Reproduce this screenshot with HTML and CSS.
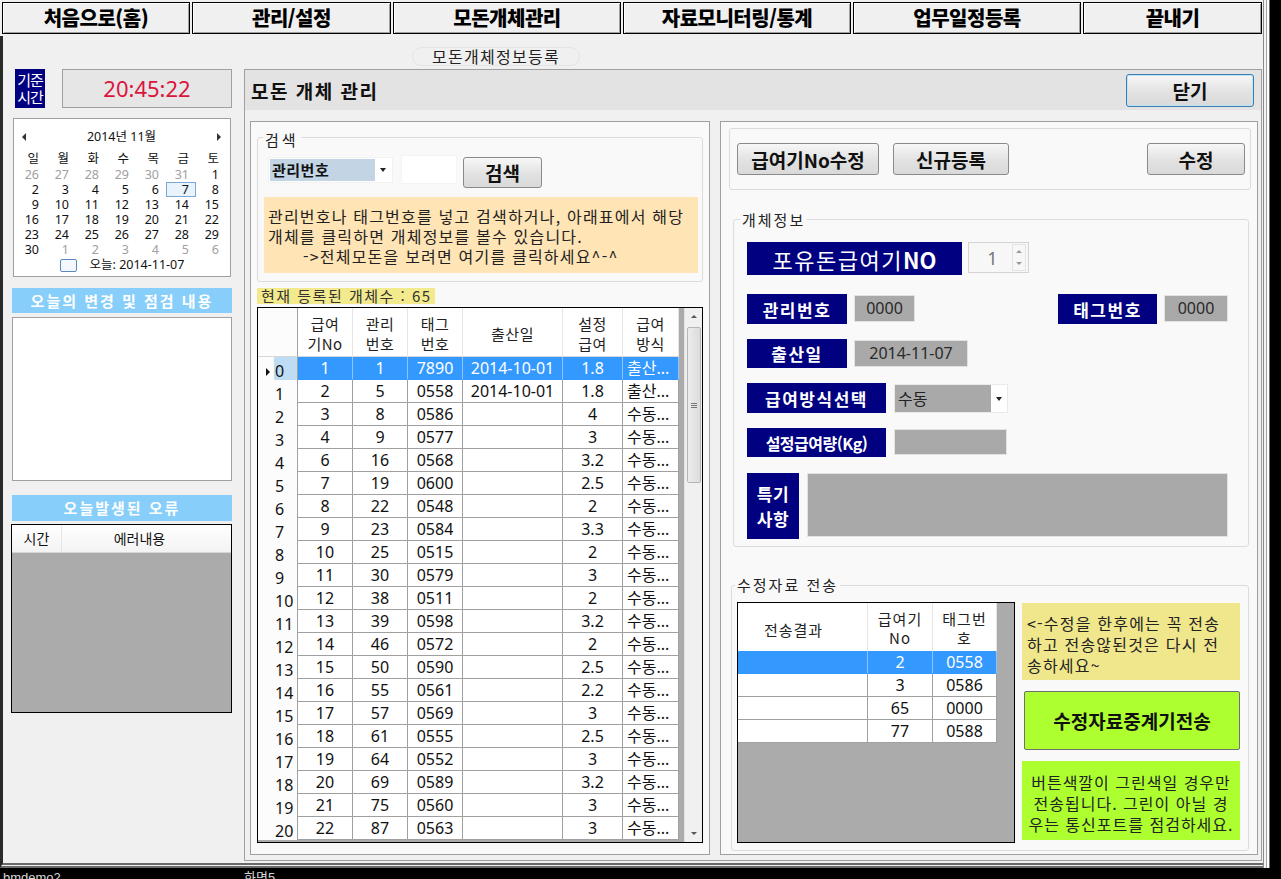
FILE: index.html
```html
<!DOCTYPE html>
<html lang="ko">
<head>
<meta charset="utf-8">
<title>모돈 개체 관리</title>
<link rel="stylesheet" href="styles.css">
</head>
<body>
<div class="screen">
  <div class="frame-row">
    <div class="window">
      <nav class="menubar">
        <button class="menu-btn m1">처음으로(홈)</button>
        <button class="menu-btn m2">관리/설정</button>
        <button class="menu-btn m3">모돈개체관리</button>
        <button class="menu-btn m4">자료모니터링/통계</button>
        <button class="menu-btn m5">업무일정등록</button>
        <button class="menu-btn m6">끝내기</button>
      </nav>
      <div class="window-body">
        <div class="tabstrip"><span class="tab-pill">모돈개체정보등록</span></div>
        <div class="content">
          <aside class="left">
            <div class="clock-row">
              <div class="kijun">기준<br>시간</div>
              <div class="clock">20:45:22</div>
            </div>
            <div class="calendar">
              <div class="cal-head"><i class="arr-l"></i><span>2014년 11월</span><i class="arr-r"></i></div>
              <div class="cal-grid">
                <span class="dn">일</span><span class="dn">월</span><span class="dn">화</span><span class="dn">수</span><span class="dn">목</span><span class="dn">금</span><span class="dn">토</span>
                <span class="om">26</span><span class="om">27</span><span class="om">28</span><span class="om">29</span><span class="om">30</span><span class="om">31</span><span>1</span>
                <span>2</span><span>3</span><span>4</span><span>5</span><span>6</span><span class="seld">7</span><span>8</span>
                <span>9</span><span>10</span><span>11</span><span>12</span><span>13</span><span>14</span><span>15</span>
                <span>16</span><span>17</span><span>18</span><span>19</span><span>20</span><span>21</span><span>22</span>
                <span>23</span><span>24</span><span>25</span><span>26</span><span>27</span><span>28</span><span>29</span>
                <span>30</span><span class="om">1</span><span class="om">2</span><span class="om">3</span><span class="om">4</span><span class="om">5</span><span class="om">6</span>
              </div>
              <div class="cal-today"><i class="today-box"></i><span>오늘: 2014-11-07</span></div>
            </div>
            <div class="blue-head h1">오늘의 변경 및 점검 내용</div>
            <div class="memo-box"></div>
            <div class="blue-head h2">오늘발생된 오류</div>
            <div class="errgrid">
              <div class="err-head"><span class="c-time">시간</span><span class="c-msg">에러내용</span></div>
            </div>
          </aside>

          <section class="main">
            <div class="titlebar">
              <h1 class="title">모돈 개체 관리</h1>
              <button class="btn close-btn">닫기</button>
            </div>
            <div class="panel-body">
              <div class="sub sub-mid">
                <div class="group g-search">
                  <div class="group-label">검색</div>
                  <div class="search-row">
                    <div class="combo-sel"><span class="combo-val">관리번호</span><i class="dd"></i></div>
                    <div class="text-in"></div>
                    <button class="btn search-btn">검색</button>
                  </div>
                  <div class="info-yellow">
                    <div>관리번호나 태그번호를 넣고 검색하거나, 아래표에서 해당</div>
                    <div>개체를 클릭하면 개체정보를 볼수 있습니다.</div>
                    <div class="indent">-&gt;전체모돈을 보려면 여기를 클릭하세요^-^</div>
                  </div>
                </div>
                <div class="count-label">현재 등록된 개체수 : 65</div>
                <div class="dgrid">
                  <div class="dg-table">
                    <div class="dg-head">
                      <div class="dh rh"></div>
                      <div class="dh">급여<br>기No</div>
                      <div class="dh">관리<br>번호</div>
                      <div class="dh">태그<br>번호</div>
                      <div class="dh">출산일</div>
                      <div class="dh">설정<br>급여</div>
                      <div class="dh">급여<br>방식</div>
                    </div>
                    <div class="dg-row sel"><div class="rh cur"><i class="tri"></i>0</div><div>1</div><div>1</div><div>7890</div><div>2014-10-01</div><div>1.8</div><div class="way">출산...</div></div>
                    <div class="dg-row"><div class="rh">1</div><div>2</div><div>5</div><div>0558</div><div>2014-10-01</div><div>1.8</div><div class="way">출산...</div></div>
                    <div class="dg-row"><div class="rh">2</div><div>3</div><div>8</div><div>0586</div><div></div><div>4</div><div class="way">수동...</div></div>
                    <div class="dg-row"><div class="rh">3</div><div>4</div><div>9</div><div>0577</div><div></div><div>3</div><div class="way">수동...</div></div>
                    <div class="dg-row"><div class="rh">4</div><div>6</div><div>16</div><div>0568</div><div></div><div>3.2</div><div class="way">수동...</div></div>
                    <div class="dg-row"><div class="rh">5</div><div>7</div><div>19</div><div>0600</div><div></div><div>2.5</div><div class="way">수동...</div></div>
                    <div class="dg-row"><div class="rh">6</div><div>8</div><div>22</div><div>0548</div><div></div><div>2</div><div class="way">수동...</div></div>
                    <div class="dg-row"><div class="rh">7</div><div>9</div><div>23</div><div>0584</div><div></div><div>3.3</div><div class="way">수동...</div></div>
                    <div class="dg-row"><div class="rh">8</div><div>10</div><div>25</div><div>0515</div><div></div><div>2</div><div class="way">수동...</div></div>
                    <div class="dg-row"><div class="rh">9</div><div>11</div><div>30</div><div>0579</div><div></div><div>3</div><div class="way">수동...</div></div>
                    <div class="dg-row"><div class="rh">10</div><div>12</div><div>38</div><div>0511</div><div></div><div>2</div><div class="way">수동...</div></div>
                    <div class="dg-row"><div class="rh">11</div><div>13</div><div>39</div><div>0598</div><div></div><div>3.2</div><div class="way">수동...</div></div>
                    <div class="dg-row"><div class="rh">12</div><div>14</div><div>46</div><div>0572</div><div></div><div>2</div><div class="way">수동...</div></div>
                    <div class="dg-row"><div class="rh">13</div><div>15</div><div>50</div><div>0590</div><div></div><div>2.5</div><div class="way">수동...</div></div>
                    <div class="dg-row"><div class="rh">14</div><div>16</div><div>55</div><div>0561</div><div></div><div>2.2</div><div class="way">수동...</div></div>
                    <div class="dg-row"><div class="rh">15</div><div>17</div><div>57</div><div>0569</div><div></div><div>3</div><div class="way">수동...</div></div>
                    <div class="dg-row"><div class="rh">16</div><div>18</div><div>61</div><div>0555</div><div></div><div>2.5</div><div class="way">수동...</div></div>
                    <div class="dg-row"><div class="rh">17</div><div>19</div><div>64</div><div>0552</div><div></div><div>3</div><div class="way">수동...</div></div>
                    <div class="dg-row"><div class="rh">18</div><div>20</div><div>69</div><div>0589</div><div></div><div>3.2</div><div class="way">수동...</div></div>
                    <div class="dg-row"><div class="rh">19</div><div>21</div><div>75</div><div>0560</div><div></div><div>3</div><div class="way">수동...</div></div>
                    <div class="dg-row"><div class="rh">20</div><div>22</div><div>87</div><div>0563</div><div></div><div>3</div><div class="way">수동...</div></div>
                  </div>
                  <div class="dg-gap"></div>
                  <div class="vscroll">
                    <div class="sb-btn"><i class="up"></i></div>
                    <div class="sb-thumb"><i></i><i></i><i></i></div>
                    <div class="sb-btn bottom"><i class="down"></i></div>
                  </div>
                </div>
              </div>

              <div class="sub sub-right">
                <div class="group g-actions">
                  <button class="btn act-btn b-no">급여기No수정</button>
                  <button class="btn act-btn b-new">신규등록</button>
                  <button class="btn act-btn b-edit">수정</button>
                </div>

                <div class="group g-info">
                  <div class="group-label">개체정보</div>
                  <div class="frow ra">
                    <div class="nlabel big">포유돈급여기<b>NO</b></div>
                    <div class="spin"><span class="spin-val">1</span><span class="spin-arrows"><i class="up"></i><i class="down"></i></span></div>
                  </div>
                  <div class="frow rb">
                    <div class="nlabel w100">관리번호</div>
                    <div class="val v61">0000</div>
                    <div class="nlabel w99 push">태그번호</div>
                    <div class="val v64">0000</div>
                  </div>
                  <div class="frow rc">
                    <div class="nlabel w100">출산일</div>
                    <div class="val v114">2014-11-07</div>
                  </div>
                  <div class="frow rd">
                    <div class="nlabel w139">급여방식선택</div>
                    <div class="combo-way"><span class="cw-val">수동</span><span class="cw-arrow"><i class="dd"></i></span></div>
                  </div>
                  <div class="frow re">
                    <div class="nlabel w139 tight">설정급여량(Kg)</div>
                    <div class="val v113"></div>
                  </div>
                  <div class="frow rf">
                    <div class="nlabel w52 two">특기<br>사항</div>
                    <div class="memo-gray"></div>
                  </div>
                </div>

                <div class="group g-send">
                  <div class="group-label">수정자료 전송</div>
                  <div class="send-row">
                    <div class="sgrid">
                      <div class="sg-table">
                        <div class="sg-head"><div class="single">전송결과</div><div>급여기<br>No</div><div>태그번<br>호</div></div>
                        <div class="sg-row sel"><div></div><div>2</div><div>0558</div></div>
                        <div class="sg-row"><div></div><div>3</div><div>0586</div></div>
                        <div class="sg-row"><div></div><div>65</div><div>0000</div></div>
                        <div class="sg-row"><div></div><div>77</div><div>0588</div></div>
                      </div>
                    </div>
                    <div class="send-notes">
                      <div class="note-yellow">&lt;-수정을 한후에는 꼭 전송<br>하고 전송않된것은 다시 전<br>송하세요~</div>
                      <button class="btn send-btn">수정자료중계기전송</button>
                      <div class="note-green">버튼색깔이 그린색일 경우만<br>전송됩니다. 그린이 아닐 경<br>우는 통신포트를 점검하세요.</div>
                    </div>
                  </div>
                </div>
              </div>
            </div>
          </section>
        </div>
      </div>
    </div>
    <div class="rframe"></div>
  </div>
  <footer class="statusbar"><span class="st1">bmdemo2</span><span class="st2">화면5</span></footer>
</div>
</body>
</html>
```

FILE: styles.css
```css
* { box-sizing: border-box; }
html, body { margin: 0; padding: 0; }
body {
  width: 1281px; height: 879px; overflow: hidden;
  background: #f0f0f0;
  font-family: "Noto Sans CJK KR", "Noto Sans", sans-serif;
  color: #111;
}
button { font-family: "Noto Sans CJK KR", "Noto Sans", sans-serif; padding: 0; margin: 0; color: #000; }

.screen { width: 1281px; height: 879px; display: flex; flex-direction: column; }
.frame-row { display: flex; height: 868px; }
.window { width: 1263px; display: flex; flex-direction: column; }
.rframe {
  width: 18px;
  background: linear-gradient(to right, #8a8a8a 0 1px, #f4f4f4 1px 3px, #a0a0a0 3px 4px, #ffffff 4px 6px, #6a6a6a 6px 7px, #000 7px 18px);
}

/* menu */
.menubar { height: 36px; padding: 2px 0 0 2px; display: flex; gap: 2px; }
.menu-btn {
  height: 32px; border: 1px solid #000;
  box-shadow: inset 1px 1px 0 #ffffff, inset -1px -1px 0 #a0a0a0;
  background: #f0f0f0;
  font-weight: 900; font-size: 20px; line-height: 28px; letter-spacing: -0.5px;
  display: flex; align-items: center; justify-content: center;
}
.m1 { width: 188px; } .m2 { width: 199px; } .m3 { width: 228px; }
.m4 { width: 228px; } .m5 { width: 228px; } .m6 { width: 179px; }

.window-body {
  flex: 1; display: flex; flex-direction: column;
  border-left: 3px solid #2a2a2a;
  border-bottom: 5px double #6a6a6a;
  padding-bottom: 2px;
}
.tabstrip { height: 32px; padding: 8px 0 0 409px; }
.tab-pill {
  display: inline-block; width: 168px; height: 19px;
  border: 1px solid #e4e4e4; border-radius: 10px;
  text-align: center; font-size: 16px; line-height: 17px; color: #222; letter-spacing: 1.3px;
}
.content { flex: 1; display: flex; padding: 1px 0 0 8px; gap: 12px; }

/* left column */
.left { width: 221px; display: flex; flex-direction: column; }
.clock-row { display: flex; gap: 17px; height: 39px; margin-left: 4px; }
.kijun {
  width: 30px; background: #000080; color: #fff;
  font-size: 15px; line-height: 17px; text-align: center; padding-top: 2px;
  letter-spacing: -1px;
}
.clock {
  width: 170px; background: #e6e6e6; border: 1px solid #a0a0a0;
  color: #dc143c; font-family: "Noto Sans", sans-serif; font-size: 22px;
  line-height: 37px; text-align: center;
}
.calendar {
  margin: 10px 0 0 2px; width: 218px; height: 159px;
  background: #fff; border: 1px solid #a0a0a0;
  font-family: "Noto Sans", "Noto Sans CJK KR", sans-serif; font-size: 12.5px; color: #111;
}
.cal-head {
  display: flex; align-items: center; justify-content: space-between;
  height: 16px; margin-top: 10px; padding: 0 9px 0 8px; line-height: 16px;
}
.arr-l { width: 0; height: 0; border-right: 4px solid #333; border-top: 4px solid transparent; border-bottom: 4px solid transparent; }
.arr-r { width: 0; height: 0; border-left: 4px solid #333; border-top: 4px solid transparent; border-bottom: 4px solid transparent; }
.cal-grid {
  display: grid; grid-template-columns: repeat(7, 30px);
  grid-template-rows: 17px repeat(6, 15px);
  margin: 5px 0 0 2px; line-height: 15px;
}
.cal-grid span { text-align: right; padding-right: 7px; }
.cal-grid .dn { line-height: 17px; }
.cal-grid .om { color: #a0a0a0; }
.cal-grid .seld { box-shadow: inset 0 0 0 1px #7aa7d6; background: #e8f3fc; }
.cal-today { display: flex; align-items: center; justify-content: center; gap: 13px; height: 16px; line-height: 16px; }
.today-box { width: 17px; height: 13px; border: 1px solid #5b87c1; border-radius: 2px; background: #f3f8fd; }

.blue-head {
  margin-left: 1px; width: 220px; background: #87cefa; color: #fff;
  font-weight: 700; font-size: 15px; text-align: center; letter-spacing: 2px;
}
.blue-head.h1 { margin-top: 11px; height: 25px; line-height: 25px; }
.blue-head.h2 { margin-top: 14px; height: 26px; line-height: 26px; }
.memo-box { margin: 4px 0 0 1px; width: 220px; height: 164px; background: #fff; border: 1px solid #a0a0a0; }
.errgrid { margin-top: 3px; height: 189px; border: 1px solid #000; background: #ababab; }
.err-head {
  display: flex; height: 28px; background: linear-gradient(#ffffff, #f3f3f3);
  border-bottom: 1px solid #d5d5d5; font-size: 14px; line-height: 27px; color: #111;
}
.c-time { width: 50px; text-align: center; border-right: 1px solid #e6e6e6; }
.c-msg { flex: 1; text-align: center; padding-right: 14px; }

/* main panel */
.main { width: 1018px; border: 1px solid #a0a0a0; background: #f0f0f0; display: flex; flex-direction: column; }
.titlebar {
  height: 40px; background: #e3e3e3; display: flex; align-items: center;
  justify-content: space-between; padding: 0 7px 0 6px;
}
.title { margin: 0; font-size: 19px; font-weight: 700; color: #111; letter-spacing: 1.5px; }
.btn {
  background: linear-gradient(#f7f7f7, #e2e2e2 55%, #d9d9d9);
  border: 1px solid #8a8a8a; border-radius: 3px;
  font-weight: 700; font-size: 19px; color: #111;
}
.close-btn { width: 128px; height: 33px; border-color: #3c7fb1; box-shadow: inset 0 0 0 1px #bfe2f7; }

.panel-body { flex: 1; display: flex; gap: 10px; padding: 11px 3px 5px 5px; }
.sub { border: 1px solid #a0a0a0; background: #f9f9f9; display: flex; flex-direction: column; }
.sub-mid { width: 460px; }
.sub-right { width: 538px; }

.group { border: 1px solid #dcdcdc; border-radius: 3px; }
.group-label {
  width: fit-content; padding: 0 2px; background: #f9f9f9;
  font-size: 15px; line-height: 16px; color: #222; letter-spacing: 2px;
}

/* search group */
.g-search { margin: 15px 0 0 6px; width: 446px; padding: 0 4px 8px 6px; }
.g-search .group-label { margin: -6px 0 0 -1px; letter-spacing: 3px; }
.search-row { display: flex; align-items: flex-start; margin-top: 7px; height: 33px; }
.combo-sel {
  margin: 2px 0 0 4px; width: 125px; height: 26px; background: #fff;
  border: 1px solid #f2f2f2; display: flex; align-items: center; padding: 0 4px 0 1px;
}
.combo-val {
  width: 105px; height: 22px; background: #c3d4e4; font-weight: 700;
  font-size: 15px; line-height: 22px; padding-left: 2px; color: #111; letter-spacing: 0.5px;
}
.dd { display: inline-block; width: 0; height: 0; border-top: 4px solid #222; border-left: 3px solid transparent; border-right: 3px solid transparent; }
.combo-sel .dd { margin-left: auto; margin-right: 2px; }
.text-in { margin-left: 8px; width: 56px; height: 29px; background: #fff; border: 1px solid #f4f4f4; }
.search-btn { margin: 2px 0 0 6px; width: 79px; height: 31px; }
.info-yellow {
  margin-top: 9px; width: 434px; height: 76px; background: #ffe4b5;
  padding: 9px 0 0 4px; font-size: 16px; line-height: 20px; color: #222; white-space: nowrap;
  letter-spacing: 1.2px;
}
.info-yellow .indent { padding-left: 35px; }
.count-label {
  margin: 6px 0 0 6px; width: 178px; height: 16px; background: #f2ea8c;
  font-size: 15px; line-height: 16px; padding-left: 4px; color: #333; white-space: nowrap;
  letter-spacing: 1.5px;
}

/* data grid */
.dgrid {
  margin: 3px 0 0 6px; width: 446px; height: 536px; border: 1px solid #000;
  display: flex; background: #ababab; overflow: hidden;
}
.dg-table { width: 421px; display: flex; flex-direction: column; }
.dg-head, .dg-row { display: grid; grid-template-columns: 40px 55px 55px 55px 100px 60px 56px; }
.dg-head { height: 49px; background: #fff; }
.dh {
  border-right: 1px solid #e6e6e6; border-bottom: 1px solid #d8d8d8;
  display: flex; align-items: center; justify-content: center; text-align: center;
  padding-top: 4px; font-size: 15px; line-height: 20px; color: #222; letter-spacing: 0.5px;
}
.dh.rh { border-right: 1px solid #a0a0a0; background: #fcfcfc; }
.dg-row { height: 23px; flex: none; }
.dg-row > div {
  border-right: 1px solid #a0a0a0; border-bottom: 1px solid #a0a0a0; background: #fff;
  font-family: "Noto Sans", "Noto Sans CJK KR", sans-serif; font-size: 16px; line-height: 22px;
  text-align: center; white-space: nowrap; overflow: hidden; color: #111;
}
.dg-row > div.rh {
  border-bottom: none; text-align: left; padding: 6px 0 0 17px; line-height: 17px; background: #fcfcfc;
  overflow: visible;
}
.dg-row > div.rh.cur {
  padding-left: 8px; background: linear-gradient(to right, #fcfcfc 16px, #bfdcf5 16px);
}
.tri {
  display: inline-block; width: 0; height: 0; margin-right: 5px; vertical-align: 1px;
  border-left: 4px solid #111; border-top: 4px solid transparent; border-bottom: 4px solid transparent;
}
.dg-row > div.way { text-align: left; padding-left: 4px; }
.dg-row.sel > div:not(.rh) { background: #3399ff; color: #fff; border-right-color: #8cc4ff; border-bottom-color: #3399ff; }
.dg-gap { flex: 1; }
.vscroll { width: 18px; background: #f0f0f0; border-left: 1px solid #e2e2e2; display: flex; flex-direction: column; align-items: center; }
.sb-btn { height: 17px; width: 100%; display: flex; align-items: center; justify-content: center; }
.sb-btn.bottom { margin-top: auto; }
.up { display: inline-block; width: 0; height: 0; border-bottom: 3px solid #555; border-left: 3px solid transparent; border-right: 3px solid transparent; }
.down { display: inline-block; width: 0; height: 0; border-top: 3px solid #555; border-left: 3px solid transparent; border-right: 3px solid transparent; }
.sb-thumb {
  margin-top: 2px; width: 14px; height: 156px; border: 1px solid #b5b5b5; border-radius: 2px;
  background: linear-gradient(to right, #ececec, #dcdcdc);
  display: flex; flex-direction: column; align-items: center; justify-content: center; gap: 1px;
}
.sb-thumb i { width: 6px; height: 1px; background: #777; }

/* right panel */
.g-actions { margin: 6px 0 0 8px; width: 522px; height: 62px; padding: 14px 5px 0 7px; display: flex; align-items: flex-start; }
.act-btn { height: 32px; }
.b-no { width: 142px; }
.b-new { width: 116px; margin-left: 14px; }
.b-edit { width: 98px; margin-left: auto; }

.g-info { margin: 29px 0 0 12px; width: 516px; height: 328px; padding: 0 0 0 13px; }
.g-info .group-label { margin: -8px 0 0 -7px; }
.frow { display: flex; align-items: flex-start; }
.ra { margin-top: 14px; height: 33px; }
.rb { margin-top: 19px; height: 30px; }
.rc { margin-top: 15px; height: 29px; }
.rd { margin-top: 15px; height: 30px; }
.re { margin-top: 15px; height: 29px; }
.rf { margin-top: 16px; height: 66px; }
.nlabel {
  height: 100%; background: #000080; color: #fff; font-weight: 700; font-size: 17px;
  display: flex; align-items: center; justify-content: center; white-space: nowrap;
  letter-spacing: 1.5px;
}
.nlabel.tight { letter-spacing: -0.5px; font-size: 16px; }
.nlabel.big { width: 215px; font-size: 22px; font-weight: 400; letter-spacing: 1.5px; }
.nlabel.big b { font-weight: 700; letter-spacing: 0; }
.w100 { width: 100px; } .w99 { width: 99px; } .w139 { width: 139px; } .w52 { width: 52px; }
.nlabel.two { text-align: center; line-height: 25px; letter-spacing: 0.5px; }
.push { margin-left: 143px; }
.val {
  margin: 1px 0 0 7px; height: 27px; background: #a9a9a9; border: 1px solid #e2e2e2;
  font-family: "Noto Sans", sans-serif; font-size: 16px; line-height: 25px; text-align: center; color: #2a2a2a;
}
.v61 { width: 61px; } .v64 { width: 64px; } .v114 { width: 114px; }
.v113 { width: 113px; margin-left: 8px; height: 26px; }
.rd .combo-way, .re .val { margin-left: 8px; }
.spin {
  margin-left: 6px; width: 61px; height: 31px; background: #f7f7f7; border: 1px solid #d4d4d4;
  display: flex; align-items: center;
}
.spin-val { flex: 1; text-align: center; padding-left: 4px; font-family: "Noto Sans", sans-serif; font-size: 18px; color: #777; }
.spin-arrows { width: 14px; height: 27px; margin-right: 2px; display: flex; flex-direction: column; align-items: center; justify-content: space-around; border: 1px solid #e4e4e4; }
.spin-arrows .up { border-bottom-color: #999; }
.spin-arrows .down { border-top-color: #999; }
.combo-way { width: 114px; height: 29px; margin-top: 1px; background: #fff; border: 1px solid #eaeaea; display: flex; }
.cw-val { width: 96px; background: #a9a9a9; font-size: 16px; line-height: 27px; padding-left: 3px; color: #222; }
.cw-arrow { flex: 1; display: flex; align-items: center; justify-content: center; }
.memo-gray { margin-left: 8px; width: 421px; height: 64px; background: #a9a9a9; border: 1px solid #e2e2e2; }

.g-send { margin: 38px 0 0 10px; width: 518px; padding: 0 0 7px 5px; }
.g-send .group-label { margin: -9px 0 0 -2px; }
.send-row { display: flex; gap: 7px; margin-top: 9px; }
.sgrid { width: 278px; height: 241px; border: 1px solid #000; background: #ababab; }
.sg-table { width: 259px; }
.sg-head, .sg-row { display: grid; grid-template-columns: 130px 65px 64px; }
.sg-head { height: 48px; background: #fff; }
.sg-head > div {
  border-right: 1px solid #e6e6e6; text-align: center; font-size: 15px; line-height: 19px;
  padding-top: 6px; color: #222; letter-spacing: 1px;
}
.sg-head > div.single { padding: 17px 18px 0 0; }
.sg-row { height: 23px; }
.sg-row > div {
  background: #fff; border-right: 1px solid #a0a0a0; border-bottom: 1px solid #a0a0a0;
  font-family: "Noto Sans", sans-serif; font-size: 16px; line-height: 22px; text-align: center; color: #111;
}
.sg-row.sel > div { background: #3399ff; color: #fff; border-right-color: #8cc4ff; border-bottom-color: #3399ff; }
.send-notes { width: 218px; display: flex; flex-direction: column; }
.note-yellow {
  margin-top: 1px; height: 77px; background: #f0e68c; padding: 10px 0 0 5px;
  font-size: 16px; line-height: 21px; color: #222; white-space: nowrap; letter-spacing: 1.2px;
}
.send-btn {
  margin: 11px 0 0 2px; width: 216px; height: 59px; background: #adff2f;
  border: 1px solid #6f6f6f; border-radius: 2px; font-size: 19px; font-weight: 700; color: #111;
}
.note-green {
  margin-top: 11px; height: 79px; background: #adff2f; padding-top: 11px;
  text-align: center; font-size: 16px; line-height: 21px; color: #222; white-space: nowrap;
  letter-spacing: 1px;
}

/* status bar */
.statusbar {
  height: 11px; background: #000; color: #d6d6d6; overflow: hidden; display: flex;
  font-family: "Liberation Sans", "Noto Sans CJK KR", sans-serif; font-size: 13px; line-height: 20px;
}
.st1 { width: 244px; padding-left: 3px; }
.st2 { padding-left: 0; }
```
